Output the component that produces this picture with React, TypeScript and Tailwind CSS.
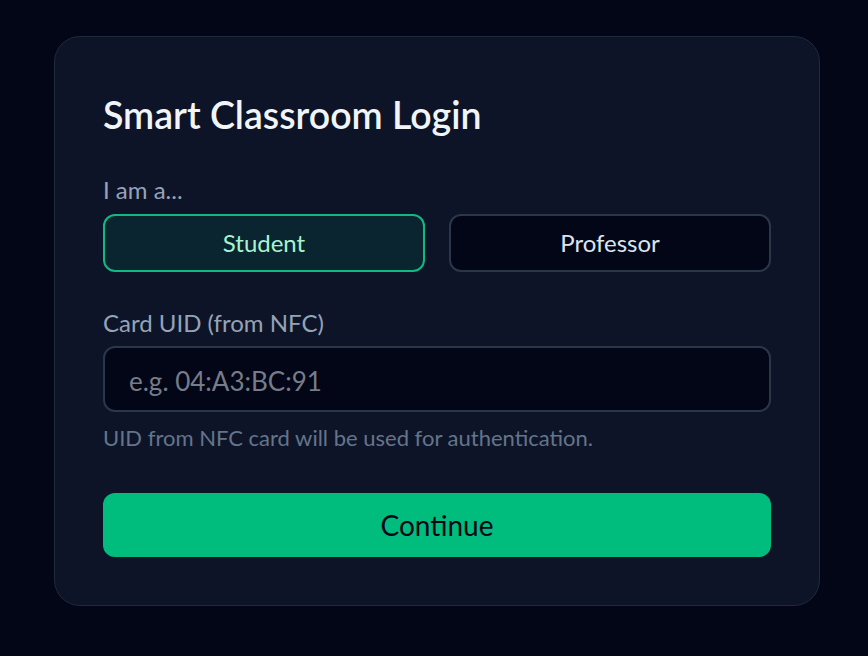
import { useState } from 'react';

type Role = 'student' | 'professor';

export default function App() {
  const [role, setRole] = useState<Role>('student');
  const [uid, setUid] = useState('');

  return (
    <div
      className="min-h-screen w-full bg-[#020617] pt-[36px] pl-[54px]"
      style={{ fontFamily: 'Lato, "Noto Sans", sans-serif' }}
    >
      <div className="w-[766px] rounded-[26px] border border-[#1f2a3b] bg-[#0e1427] px-12 pt-[55px] pb-[48px]">
        <h1 className="text-[37.5px] font-semibold leading-[45px] text-[#f1f5f9]">Smart Classroom Login</h1>

        <p className="mt-[39px] text-[24px] leading-[28px] text-[#94a3b8]">I am a...</p>
        <div className="mt-[10px] grid grid-cols-2 gap-6">
          {(['student', 'professor'] as Role[]).map((item) => {
            const active = role === item;
            return (
              <button
                key={item}
                type="button"
                onClick={() => setRole(item)}
                className={
                  active
                    ? 'h-[58px] rounded-[12px] border-2 border-[#10b981] bg-[#0b2530] text-[24px] text-[#a7f3d0]'
                    : 'h-[58px] rounded-[12px] border-2 border-[#2a374a] bg-[#020617] text-[24px] text-[#dde4ee]'
                }
              >
                {item === 'student' ? 'Student' : 'Professor'}
              </button>
            );
          })}
        </div>

        <label className="mt-[37px] block">
          <span className="block text-[24px] leading-[28px] text-[#94a3b8]">Card UID (from NFC)</span>
          <input
            value={uid}
            onChange={(event) => setUid(event.target.value)}
            placeholder="e.g. 04:A3:BC:91"
            className="mt-[9px] block h-[66px] w-full rounded-[12px] border-2 border-[#2a374a] bg-[#020617] px-[24px] pt-[3px] text-[26px] text-[#e2e8f0] placeholder-[#767c88] outline-none"
          />
        </label>
        <p className="mt-[13px] text-[22px] leading-[26px] text-[#64748b]">
          UID from NFC card will be used for authentication.
        </p>

        <button
          type="button"
          className="mt-[42px] h-[64px] w-full rounded-[12px] bg-emerald-500 text-[28px] text-[#020617]"
        >
          Continue
        </button>
      </div>
    </div>
  );
}
